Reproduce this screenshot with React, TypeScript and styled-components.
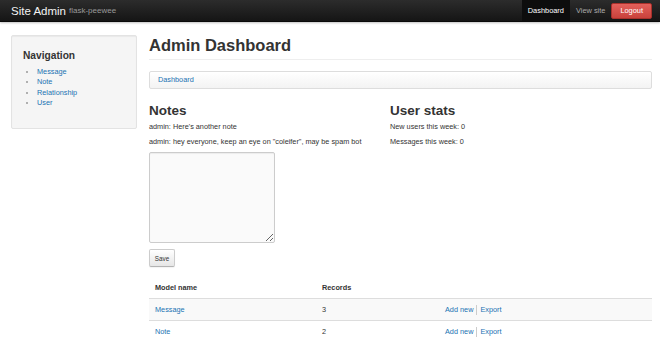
import React from 'react';
import { styled, createGlobalStyle } from 'styled-components';

const GlobalStyle = createGlobalStyle`
    html, body {
        margin: 0;
        padding: 0;
        background: #fff;
        overflow: hidden;
    }
    body {
        font-family: "Liberation Sans", Arial, sans-serif;
        font-size: 7.3px;
        line-height: 10px;
        color: #333;
    }
`;

const Navbar = styled.div`
    height: 22px;
    display: flex;
    justify-content: space-between;
    align-items: stretch;
    padding: 0 8px 0 11px;
    background: linear-gradient(#2c2c2c, #151515);
    border-bottom: 1px solid #0a0a0a;
    box-sizing: border-box;
    box-shadow: 0 1px 2px rgba(0, 0, 0, 0.25);
`;

const Brand = styled.a`
    display: flex;
    align-items: center;
    gap: 3px;
    color: #f2f2f2;
    font-size: 11.5px;
    text-decoration: none;
    small {
        color: #999;
        font-size: 8px;
        padding-top: 1px;
    }
`;

const NavItems = styled.div`
    display: flex;
    align-items: center;
    height: 100%;
`;

const NavLink = styled.a<{ $active?: boolean }>`
    display: flex;
    align-items: center;
    height: 100%;
    padding: 0 6px;
    font-size: 7.4px;
    text-decoration: none;
    color: ${p => (p.$active ? '#fff' : '#aaa')};
    background: ${p => (p.$active ? '#0d0d0d' : 'transparent')};
`;

const LogoutButton = styled.a`
    display: flex;
    align-items: center;
    height: 16px;
    padding: 0 8px;
    font-size: 7.4px;
    color: #fff;
    text-decoration: none;
    border-radius: 2px;
    background: linear-gradient(#e3605b, #c9423c);
    border: 1px solid #a9302b;
    box-sizing: border-box;
`;

const Container = styled.div`
    display: grid;
    grid-template-columns: 126px 503px;
    column-gap: 12px;
    align-items: start;
    padding: 13px 8px 0 11px;
`;

const Well = styled.div`
    background: #f5f5f5;
    border: 1px solid #e3e3e3;
    border-radius: 2px;
    box-shadow: inset 0 1px 1px rgba(0, 0, 0, 0.05);
    padding: 14px 11px 20px;
    height: 94px;
    box-sizing: border-box;
`;

const NavHeader = styled.h4`
    margin: 0 0 5px;
    font-size: 10.2px;
    line-height: 12px;
    font-weight: bold;
    color: #333;
`;

const NavList = styled.ul`
    margin: 0;
    padding-left: 14px;
    list-style: disc;
    li {
        line-height: 10.3px;
    }
    li::marker {
        color: #999;
        font-size: 8px;
    }
`;

const Link = styled.a`
    color: #1a73b3;
    text-decoration: none;
`;

const Main = styled.div`
    display: flex;
    flex-direction: column;
`;

const PageHeader = styled.div`
    padding-bottom: 4px;
    border-bottom: 1px solid #eee;
    margin-bottom: 11px;
    h1 {
        margin: 0;
        font-size: 16.5px;
        line-height: 20px;
        font-weight: bold;
        color: #333;
    }
`;

const Breadcrumb = styled.div`
    height: 18px;
    box-sizing: border-box;
    display: flex;
    align-items: center;
    padding: 0 8px;
    background: linear-gradient(#fff, #f3f3f3);
    border: 1px solid #ddd;
    border-radius: 2px;
    box-shadow: inset 0 1px 0 #fff;
`;

const Row = styled.div`
    display: grid;
    grid-template-columns: 241px 1fr;
    margin-top: 14px;
`;

const Column = styled.div`
    display: flex;
    flex-direction: column;
    align-items: flex-start;
`;

const H3 = styled.h3`
    margin: 0 0 4px;
    font-size: 13.5px;
    line-height: 15px;
    font-weight: bold;
    color: #333;
`;

const P = styled.p`
    margin: 0 0 5px;
    line-height: 10px;
    color: #333;
`;

const TextArea = styled.textarea`
    display: block;
    width: 126px;
    height: 91px;
    box-sizing: border-box;
    margin: 0;
    background: #fafafa;
    border: 1px solid #ccc;
    border-radius: 2px;
    box-shadow: inset 0 1px 1px rgba(0, 0, 0, 0.06);
    font-family: inherit;
    font-size: 7px;
`;

const Button = styled.button`
    margin-top: 6px;
    height: 18px;
    width: 26px;
    padding: 0;
    font-family: inherit;
    font-size: 6.3px;
    color: #333;
    background: linear-gradient(#fff, #e6e6e6);
    border: 1px solid #ccc;
    border-bottom-color: #b3b3b3;
    border-radius: 2px;
    box-shadow: 0 1px 1px rgba(0, 0, 0, 0.05);
`;

const Table = styled.table`
    margin-top: 10px;
    width: 100%;
    border-collapse: collapse;
    th, td {
        text-align: left;
        padding: 6px 6px 5px;
        line-height: 10px;
        vertical-align: top;
    }
    th {
        font-weight: bold;
        color: #333;
    }
    tbody td {
        border-top: 1px solid #ddd;
    }
    tbody tr:last-child td {
        border-bottom: 1px solid #ddd;
    }
    tbody tr:nth-child(odd) td {
        background: #f9f9f9;
    }
`;

const Actions = styled.div`
    display: flex;
    a + a {
        border-left: 1px solid #ccc;
        margin-left: 3px;
        padding-left: 3px;
    }
`;

const models = [
    { name: 'Message', count: 3 },
    { name: 'Note', count: 2 },
    { name: 'Relationship', count: 4 },
    { name: 'User', count: 3 },
];

export default function App() {
    return (
        <>
            <GlobalStyle />
            <Navbar>
                <Brand href="#">
                    Site Admin <small>flask-peewee</small>
                </Brand>
                <NavItems>
                    <NavLink $active href="#">Dashboard</NavLink>
                    <NavLink href="#">View site</NavLink>
                    <LogoutButton href="#">Logout</LogoutButton>
                </NavItems>
            </Navbar>
            <Container>
                <Well>
                    <NavHeader>Navigation</NavHeader>
                    <NavList>
                        {models.map(m => (
                            <li key={m.name}><Link href="#">{m.name}</Link></li>
                        ))}
                    </NavList>
                </Well>
                <Main>
                    <PageHeader>
                        <h1>Admin Dashboard</h1>
                    </PageHeader>
                    <Breadcrumb>
                        <Link href="#">Dashboard</Link>
                    </Breadcrumb>
                    <Row>
                        <Column>
                            <H3>Notes</H3>
                            <P>admin: Here's another note</P>
                            <P>admin: hey everyone, keep an eye on "coleifer", may be spam bot</P>
                            <TextArea />
                            <Button>Save</Button>
                        </Column>
                        <Column>
                            <H3>User stats</H3>
                            <P>New users this week: 0</P>
                            <P>Messages this week: 0</P>
                        </Column>
                    </Row>
                    <Table>
                        <colgroup>
                            <col style={{ width: 167 }} />
                            <col style={{ width: 123 }} />
                            <col />
                        </colgroup>
                        <thead>
                            <tr>
                                <th>Model name</th>
                                <th>Records</th>
                                <th></th>
                            </tr>
                        </thead>
                        <tbody>
                            {models.slice(0, 2).map(m => (
                                <tr key={m.name}>
                                    <td><Link href="#">{m.name}</Link></td>
                                    <td>{m.count}</td>
                                    <td>
                                        <Actions>
                                            <Link href="#">Add new</Link>
                                            <Link href="#">Export</Link>
                                        </Actions>
                                    </td>
                                </tr>
                            ))}
                        </tbody>
                    </Table>
                </Main>
            </Container>
        </>
    );
}
